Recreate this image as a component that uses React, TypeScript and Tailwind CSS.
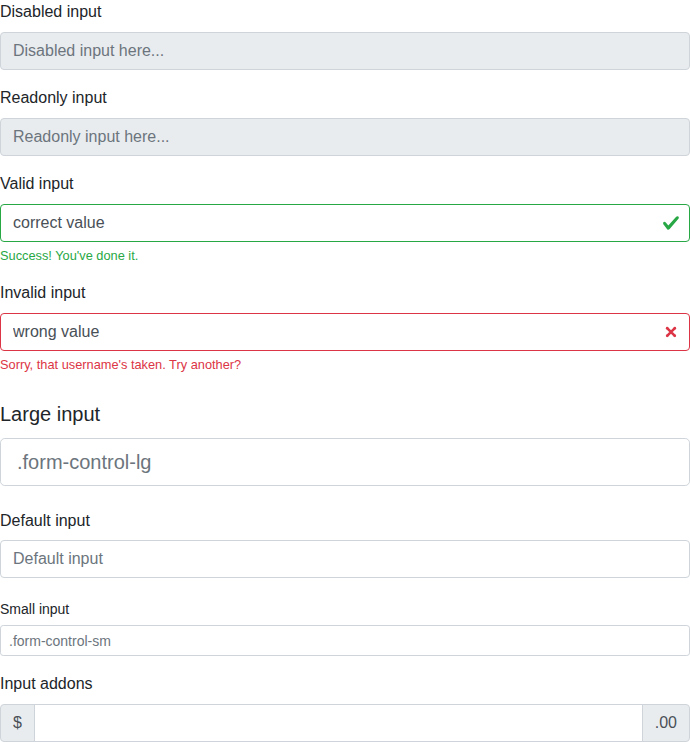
import React from "react";

const font = { fontFamily: '"Liberation Sans", Arial, sans-serif' };

const baseInput =
  "block w-full border bg-white text-[#495057] placeholder:text-[#6c757d] outline-none";

function Label({ children }: { children: React.ReactNode }) {
  return <label className="mb-2 block text-[16px] leading-6 text-[#212529]">{children}</label>;
}

export default function App() {
  return (
    <div style={font} className="w-[690px] bg-white text-[#212529]">
      {/* Disabled */}
      <div className="mb-4">
        <Label>Disabled input</Label>
        <input
          disabled
          placeholder="Disabled input here..."
          className={`${baseInput} h-[38px] rounded-[4px] border-[#ced4da] !bg-[#e9ecef] px-3 text-[16px] opacity-100`}
        />
      </div>

      {/* Readonly */}
      <div className="mb-4">
        <Label>Readonly input</Label>
        <input
          readOnly
          placeholder="Readonly input here..."
          className={`${baseInput} h-[38px] rounded-[4px] border-[#ced4da] !bg-[#e9ecef] px-3 text-[16px]`}
        />
      </div>

      {/* Valid */}
      <div className="mb-4">
        <Label>Valid input</Label>
        <div className="relative">
          <input
            defaultValue="correct value"
            className={`${baseInput} h-[38px] rounded-[4px] border-[#28a745] pl-3 pr-9 text-[16px]`}
          />
          <svg
            viewBox="0 0 8 8"
            className="pointer-events-none absolute right-[10px] top-[10px] h-[18px] w-[18px]"
          >
            <path
              fill="#28a745"
              d="M2.3 6.73L.6 4.53c-.4-1.04.46-1.4 1.1-.8l1.1 1.4 3.4-3.8c.6-.63 1.6-.27 1.2.7l-4 4.6c-.43.5-.8.4-1.1.1z"
            />
          </svg>
        </div>
        <div className="mt-1 text-[12.8px] leading-[19.2px] text-[#28a745]">Success! You've done it.</div>
      </div>

      {/* Invalid */}
      <div className="mb-4">
        <Label>Invalid input</Label>
        <div className="relative">
          <input
            defaultValue="wrong value"
            className={`${baseInput} h-[38px] rounded-[4px] border-[#dc3545] pl-3 pr-9 text-[16px]`}
          />
          <svg
            viewBox="-2 -2 7 7"
            fill="#dc3545"
            className="pointer-events-none absolute right-[10px] top-[10px] h-[18px] w-[18px]"
          >
            <path stroke="#dc3545" d="M0 0l3 3m0-3L0 3" />
            <circle r=".5" />
            <circle cx="3" r=".5" />
            <circle cy="3" r=".5" />
            <circle cx="3" cy="3" r=".5" />
          </svg>
        </div>
        <div className="mt-1 text-[12.8px] leading-[19.2px] text-[#dc3545]">
          Sorry, that username's taken. Try another?
        </div>
      </div>

      {/* Large */}
      <div className="mb-4">
        <label className="block pb-[9px] pt-[9px] text-[20px] leading-[30px] text-[#212529]">Large input</label>
        <input
          placeholder=".form-control-lg"
          className={`${baseInput} h-[48px] rounded-[4.8px] border-[#ced4da] px-4 text-[20px]`}
        />
      </div>

      {/* Default */}
      <div className="mb-4">
        <label className="block pb-[7px] pt-[7px] text-[16px] leading-6 text-[#212529]">Default input</label>
        <input
          placeholder="Default input"
          className={`${baseInput} h-[38px] rounded-[4px] border-[#ced4da] px-3 text-[16px]`}
        />
      </div>

      {/* Small */}
      <div className="mb-4">
        <label className="block pb-[5px] pt-[5px] text-[14px] leading-[21px] text-[#212529]">Small input</label>
        <input
          placeholder=".form-control-sm"
          className={`${baseInput} h-[31px] rounded-[3.2px] border-[#ced4da] px-2 text-[14px]`}
        />
      </div>

      {/* Addons */}
      <div>
        <Label>Input addons</Label>
        <div className="flex h-[38px] w-full">
          <span className="flex items-center rounded-l-[4px] border border-[#ced4da] bg-[#e9ecef] px-3 text-[16px] text-[#495057]">
            $
          </span>
          <input className="-ml-px block min-w-0 flex-1 border border-[#ced4da] bg-white px-3 text-[16px] text-[#495057] outline-none" />
          <span className="-ml-px flex items-center rounded-r-[4px] border border-[#ced4da] bg-[#e9ecef] px-3 text-[16px] text-[#495057]">
            .00
          </span>
        </div>
      </div>
    </div>
  );
}
